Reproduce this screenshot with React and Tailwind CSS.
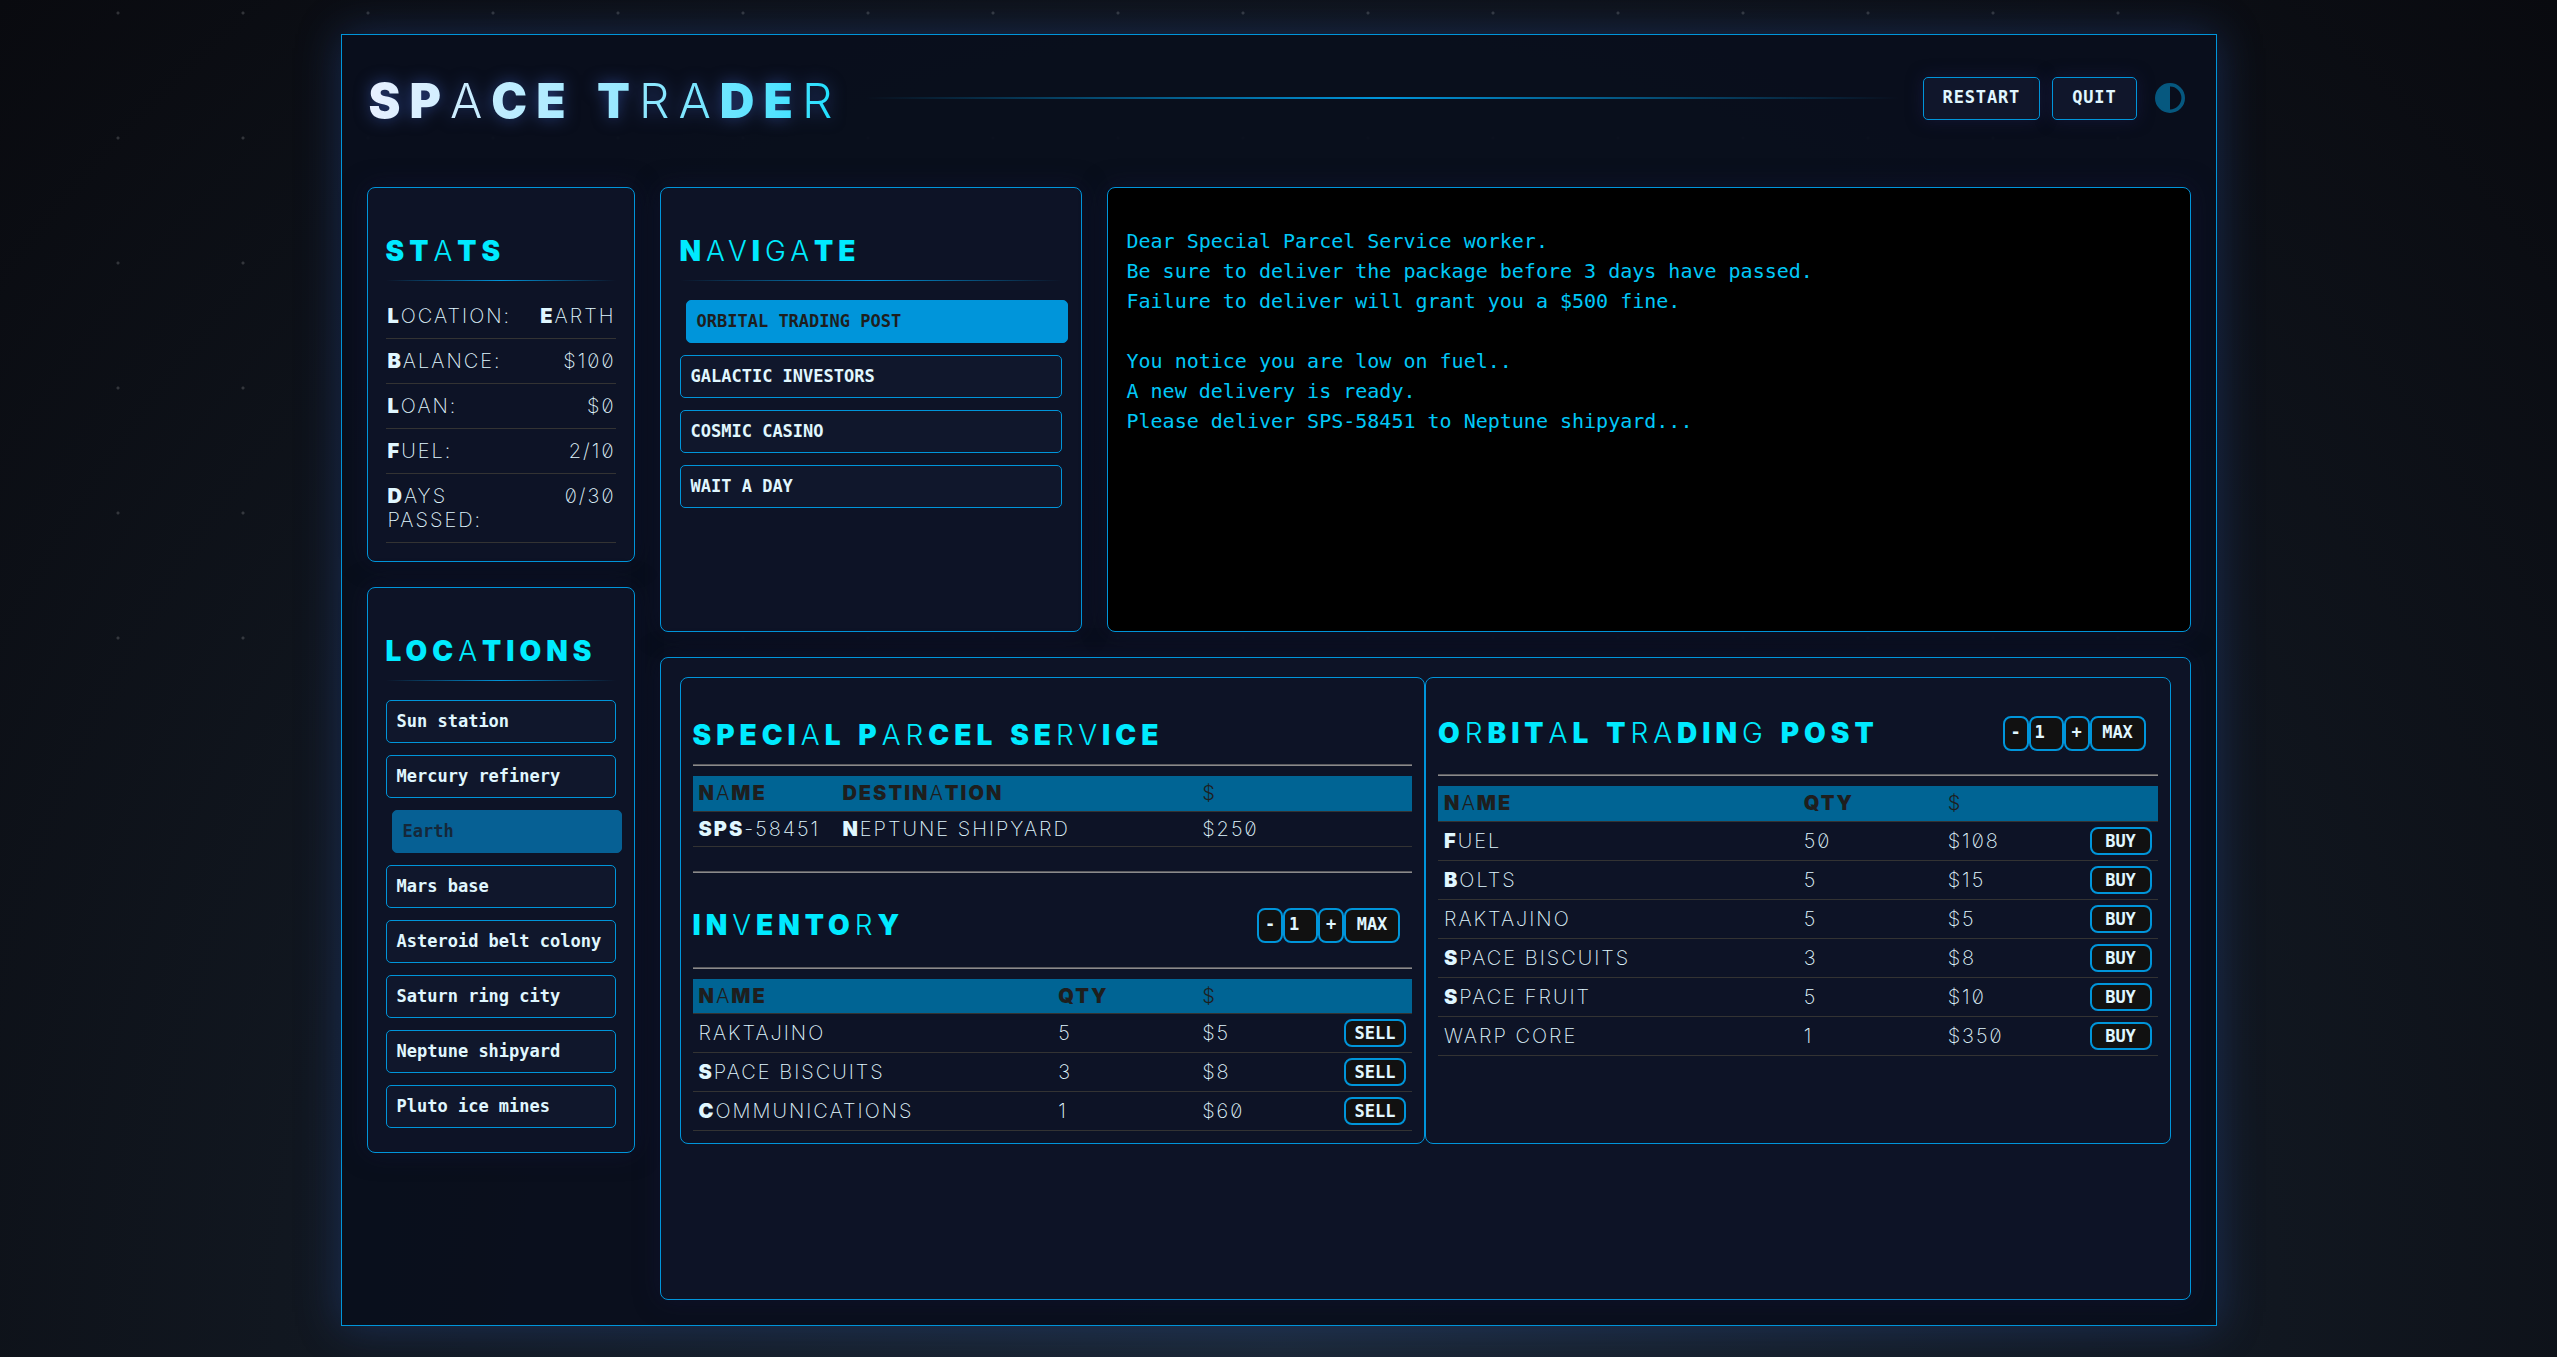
const BODY = "text-xl leading-6 font-extralight tracking-widest text-[#e0f7ff] slashed-zero uppercase";

const HEAVY = /([^AVRG ]+)/;

function Display({ text }) {
  return text.split(HEAVY).filter(Boolean).map((run, i) => (
    <span key={i} className={HEAVY.test(run) ? "font-black" : "font-light"}>{run}</span>
  ));
}

function Initial({ text }) {
  const m = text.match(/^(SPS|[A-QS-VX-Z])(.*)$/);
  if (!m) return text;
  return (
    <>
      <span className="font-black">{m[1]}</span>
      {m[2]}
    </>
  );
}

function Heading({ text }) {
  return (
    <h2 className="text-[28px] leading-[34px] tracking-[5px] text-[#00eaff] whitespace-nowrap">
      <Display text={text} />
    </h2>
  );
}

function Card({ className, children }) {
  return (
    <section className={`rounded-lg border border-[#0095da] shadow-[0_0_24px_rgba(20,20,60,0.5)] ${className}`}>
      {children}
    </section>
  );
}

function FadeRule() {
  return <div className="mt-3 mb-[13px] h-px bg-linear-to-r from-transparent via-[#0095da] to-transparent" />;
}

const STATS = [
  ["LOCATION:", "EARTH"],
  ["BALANCE:", "$100"],
  ["LOAN:", "$0"],
  ["FUEL:", "2/10"],
  ["DAYS PASSED:", "0/30"],
];
const LOCATIONS = [
  "Sun station", "Mercury refinery", "Earth", "Mars base",
  "Asteroid belt colony", "Saturn ring city", "Neptune shipyard", "Pluto ice mines",
];
const PLACES = ["ORBITAL TRADING POST", "GALACTIC INVESTORS", "COSMIC CASINO", "WAIT A DAY"];
const LOG = [
  "Dear Special Parcel Service worker.",
  "Be sure to deliver the package before 3 days have passed.",
  "Failure to deliver will grant you a $500 fine.",
  "",
  "You notice you are low on fuel..",
  "A new delivery is ready.",
  "Please deliver SPS-58451 to Neptune shipyard...",
];
const INVENTORY = [["RAKTAJINO", "5", "$5"], ["SPACE BISCUITS", "3", "$8"], ["COMMUNICATIONS", "1", "$60"]];
const POST = [
  ["FUEL", "50", "$108"], ["BOLTS", "5", "$15"], ["RAKTAJINO", "5", "$5"],
  ["SPACE BISCUITS", "3", "$8"], ["SPACE FRUIT", "5", "$10"], ["WARP CORE", "1", "$350"],
];

const MONO = "font-['DejaVu_Sans_Mono',monospace] font-bold text-[17px]";

function MenuButton({ label, tone }) {
  const tones = {
    idle: "border-[#0095da] bg-[#10172c] text-[#e0f7ff]",
    on: "translate-x-1.5 border-[#0095da] bg-[#0095da] text-[#1e1e1e]",
    here: "translate-x-1.5 border-[#066094] bg-[#066094] text-[#15283a]",
  };
  return (
    <button disabled={tone === "here"} className={`h-[43px] w-full rounded-[5px] border px-2.5 text-left whitespace-nowrap ${MONO} ${tones[tone]}`}>
      {label}
    </button>
  );
}

function Menu({ items, toneOf }) {
  return (
    <nav className="flex flex-col gap-3 py-1.5">
      {items.map((item) => <MenuButton key={item} label={item} tone={toneOf(item)} />)}
    </nav>
  );
}

const SMALL = `rounded-lg border-2 border-[#0095da] bg-[#111] text-[#e0f7ff] ${MONO}`;

function Amount({ name }) {
  return (
    <div className="mr-3 flex h-[35px]">
      <button aria-label={`Decrease ${name} amount`} className={`w-[26px] ${SMALL}`}>-</button>
      <input aria-label={`${name} amount`} defaultValue="1" className={`w-[35px] px-1 ${SMALL}`} />
      <button aria-label={`Increase ${name} amount`} className={`w-[26px] ${SMALL}`}>+</button>
      <button className={`w-14 ${SMALL}`}>MAX</button>
    </div>
  );
}

function Rule() {
  return <hr className="h-0.5 border-t border-b border-t-[#5c5c60] border-b-[#8a8a8c]" />;
}

function Table({ heads, widths, rows, action }) {
  return (
    <table className={`mt-2.5 w-full table-fixed border-collapse text-left ${BODY}`}>
      <thead>
        <tr className="h-[35px] border-b border-[#333] bg-[#006494] text-[#1e1e1e]">
          {heads.map((h, i) => (
            <th key={i} className={`px-1.5 font-light ${widths[i]}`}>
              {h === "$" ? "$" : <Display text={h} />}
            </th>
          ))}
        </tr>
      </thead>
      <tbody>
        {rows.map((row) => (
          <tr key={row[0]} className={`border-b border-[#333] ${action ? "h-[39px]" : "h-[35px]"}`}>
            {row.map((cell) => (
              <td key={cell} className="px-1.5 whitespace-nowrap"><Initial text={cell} /></td>
            ))}
            <td className="px-1.5">
              {action && <button className={`ml-auto block h-7 w-[62px] leading-5 tracking-normal ${SMALL}`}>{action}</button>}
            </td>
          </tr>
        ))}
      </tbody>
    </table>
  );
}

const TOP_BUTTON = `h-[43px] rounded-[5px] border border-[#0095da] bg-[#10162b] px-[19px] tracking-wider text-[#e0f7ff] shadow-[0_0_16px_rgba(30,30,80,0.5)] ${MONO}`;
const GOODS_WIDTHS = ["w-[50%]", "w-[20%]", "w-[18%]", "w-[12%]"];
const PARCEL_WIDTHS = ["w-[20%]", "w-[50%]", "w-[18%]", "w-[12%]"];

export default function App() {
  return (
    <div className="relative isolate flex min-h-screen bg-[radial-gradient(ellipse_at_bottom,#1b2735_0%,#090a0f_100%)] px-4 pt-[34px] pb-[31px] font-['Inter',sans-serif]">
      <div className="absolute inset-0 right-[14%] bottom-[46%] -z-10 bg-[radial-gradient(circle_at_118px_13px,rgba(255,255,255,0.16)_1px,transparent_2px)] bg-size-[125px_125px]" />
      <main className="mx-auto flex w-full max-w-[1876px] flex-col border border-[#0095da] bg-[#090f1c]/95 p-[25px] shadow-[0_0_40px_rgba(40,75,150,0.45)]">
        <header className="mb-[51px] flex h-[76px] items-center">
          <h1 className="bg-linear-to-r from-[#e8f0ff] to-[#00e0ff] bg-clip-text pt-1.5 pl-0.5 text-5xl tracking-[9px] whitespace-nowrap text-transparent drop-shadow-[0_0_8px_rgba(70,110,220,0.5)]">
            <Display text="SPACE TRADER" />
          </h1>
          <div className="mx-6 h-0.5 flex-1 bg-linear-to-r from-transparent via-[#0095da] to-transparent" />
          <div className="flex items-center gap-3">
            <button className={TOP_BUTTON}>RESTART</button>
            <button className={TOP_BUTTON}>QUIT</button>
            <button aria-label="Toggle theme" className="px-1.5">
              <svg viewBox="0 0 30 30" className="size-[30px]">
                <circle cx="15" cy="15" r="13.2" fill="none" stroke="#06587f" strokeWidth="3.6" />
                <path d="M15 1.5a13.5 13.5 0 0 0 0 27z" fill="#06587f" />
              </svg>
            </button>
          </div>
        </header>

        <div className="flex flex-1 gap-[25px]">
          <aside className="flex w-[268px] flex-col gap-[25px]">
            <Card className="bg-[#0d1326] p-[18px] pt-[46px]">
              <Heading text="STATS" />
              <FadeRule />
              <dl className={BODY}>
                {STATS.map(([k, v]) => {
                  const [first, ...rest] = k.split(" ");
                  return (
                    <div key={k} className="flex justify-between border-b border-[#333] py-2.5">
                      <dt className="pl-0.5">
                        <span className="block"><Initial text={first} /></span>
                        {rest.map((word) => <span key={word} className="block">{word}</span>)}
                      </dt>
                      <dd><Initial text={v} /></dd>
                    </div>
                  );
                })}
              </dl>
            </Card>
            <Card className="bg-[#0d1326] p-[18px] pt-[46px]">
              <Heading text="LOCATIONS" />
              <FadeRule />
              <Menu items={LOCATIONS} toneOf={(l) => (l === "Earth" ? "here" : "idle")} />
            </Card>
          </aside>

          <div className="flex min-w-0 flex-1 flex-col gap-[25px]">
            <div className="flex h-[445px] gap-[25px]">
              <Card className="w-[422px] bg-[#0d1326] p-[19px] pt-[46px]">
                <Heading text="NAVIGATE" />
                <FadeRule />
                <Menu items={PLACES} toneOf={(p) => (p === PLACES[0] ? "on" : "idle")} />
              </Card>
              <Card className="flex-1 bg-black px-[19px] py-[38px] font-['DejaVu_Sans_Mono',monospace] text-xl leading-[30px] text-[#00c8f8]">
                {LOG.map((line, i) => <p key={i} className="min-h-[30px]">{line}</p>)}
              </Card>
            </div>

            <Card className="flex-1 bg-[#0d1326] p-[19px]">
              <div className="flex">
                <section className="min-w-0 flex-1 rounded-lg border border-[#0095da] p-3">
                  <div className="flex h-[74px] items-end pb-3"><Heading text="SPECIAL PARCEL SERVICE" /></div>
                  <Rule />
                  <Table heads={["NAME", "DESTINATION", "$", ""]} widths={PARCEL_WIDTHS} rows={[["SPS-58451", "NEPTUNE SHIPYARD", "$250"]]} />
                  <div className="h-6" />
                  <Rule />
                  <div className="flex h-[94px] items-center justify-between pt-[11px]">
                    <Heading text="INVENTORY" />
                    <Amount name="Inventory" />
                  </div>
                  <Rule />
                  <Table heads={["NAME", "QTY", "$", ""]} widths={GOODS_WIDTHS} rows={INVENTORY} action="SELL" />
                </section>
                <section className="min-w-0 flex-1 rounded-lg border border-[#0095da] p-3">
                  <div className="flex h-[84px] items-center justify-between pt-0.5">
                    <Heading text="ORBITAL TRADING POST" />
                    <Amount name="Trading post" />
                  </div>
                  <Rule />
                  <Table heads={["NAME", "QTY", "$", ""]} widths={GOODS_WIDTHS} rows={POST} action="BUY" />
                </section>
              </div>
            </Card>
          </div>
        </div>
      </main>
    </div>
  );
}
